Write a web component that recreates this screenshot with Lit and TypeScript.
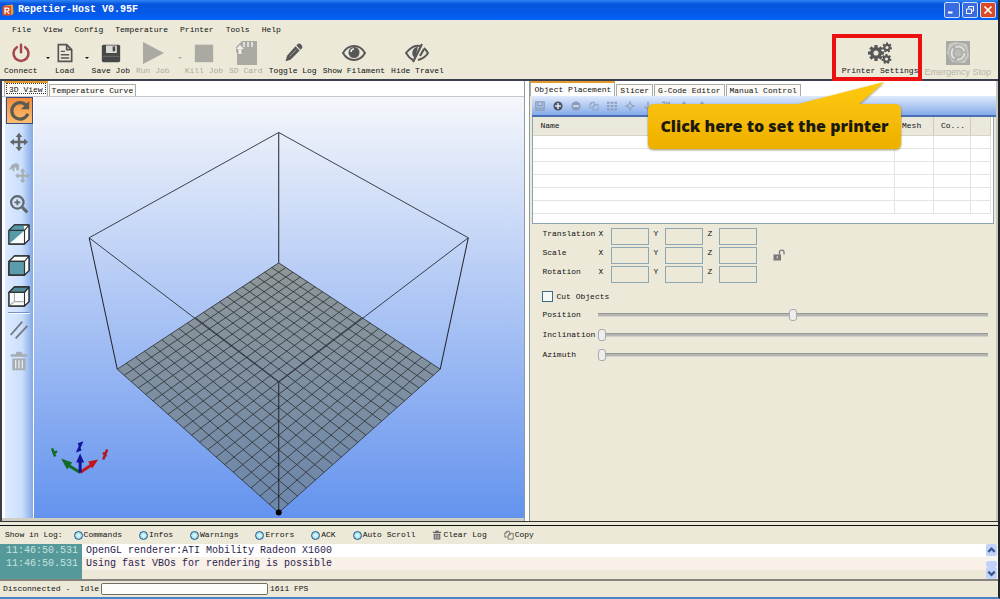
import { LitElement, html, svg, css, nothing } from "lit";
import { customElement } from "lit/decorators.js";
import { classMap } from "lit/directives/class-map.js";

type Pt = [number, number];

const gear = (cx: number, cy: number, r: number, teeth: number) => {
  const items = [];
  for (let i = 0; i < teeth; i++) {
    items.push(svg`<rect x=${cx - r * 0.2} y=${cy - r} width=${r * 0.4} height=${r * 0.5}
      transform="rotate(${(i * 360) / teeth} ${cx} ${cy})"/>`);
  }
  return svg`${items}<circle cx=${cx} cy=${cy} r=${r * 0.53} fill="none" stroke="currentColor" stroke-width=${r * 0.42}/>`;
};

const cube = (part: "diag" | "front" | "top") => svg`
  <g stroke="#333" stroke-width="1.2" stroke-linejoin="round">
    <path fill="#f8fbfb" d="M1 7 7 1H23V17L18 22H1Z"/>
    ${part === "diag" ? svg`<path fill="#549aa8" stroke="none" d="M1 7 7 1H17L18 7 2 21Z"/>` : nothing}
    ${part === "front" ? svg`<path fill="#5a9cab" d="M1 7H18V22H1Z"/>` : nothing}
    ${part === "top" ? svg`<path fill="#4f8b97" d="M1 7 7 1H23L18 7Z"/><path fill="none" stroke="#aaa" d="M7 8V17H17M7 17 2 21"/>` : nothing}
    <path fill="none" d="M1 7H18V22H1ZM1 7 7 1H23L18 7M23 1V17L18 22"/>
  </g>`;

const moveArrows = svg`<path d="M12 1 16 6H13.5V10.500H18V8L23 12 18 16V13.500H13.500V18H16L12 23 8 18H10.500V13.500H6V16L1 12 6 8V10.500H10.500V6H8Z"/>`;
const trash = svg`<path d="M9 1H15L16 4H22V7H2V4H8ZM4 9H20V23H4Z"/><path stroke="#eee" stroke-width="1.500" d="M8 11V21M12 11V21M16 11V21"/>`;
const copy = svg`<g fill="none" stroke="currentColor" stroke-width="2"><path d="M2 7 7 3H13V8M2 7V17H9M2 7H7V3M10 12 14 8H22V22H10ZM10 12H15V8"/></g>`;

const icons: Record<string, unknown> = {
  power: svg`<g fill="none" stroke="#a5474c" stroke-width="3" stroke-linecap="round"><path d="M7 5A9 9 0 1 0 17 5"/><path d="M12 2V11"/></g>`,
  page: svg`<path fill="none" stroke="#555" stroke-width="2" d="M4 2H14L20 8V22H4ZM14 2V8H20"/><path stroke="#555" stroke-width="1.700" d="M7 10H12M7 14H17M7 18H17"/>`,
  disk: svg`<rect x="1" y="2" width="22" height="21" rx="2" fill="#484848"/><rect x="6" y="3" width="13" height="9" fill="#dcdcd6"/><rect x="14" y="4" width="3" height="6" fill="#484848"/><path stroke="#777" d="M2 16H22"/>`,
  play: svg`<path d="M2 1 23 12 2 23Z"/>`,
  stop: svg`<rect x="1" y="2" width="22" height="21"/>`,
  sd: svg`<path d="M8 0H23V24H3V12L2 11V6Z"/><path stroke="#ddd" stroke-width="2" d="M10 1V6M14 1V6M18 1V6"/><path fill="#eee" d="M6 4 10 8H7.500V13H4.500V8H2Z"/>`,
  pencil: svg`<path d="M3 22 5 15 15 4 20 9 9 20ZM16 3 18 1Q20 0 22 2 24 4 23 6L21 8Z"/><path stroke="#aaa" d="M8 16 16 8"/>`,
  eye: svg`<path fill="none" stroke="currentColor" stroke-width="2" d="M1 12Q5 5 12 5T23 12Q19 19 12 19T1 12Z"/><circle cx="12" cy="11.500" r="5.500"/><path fill="none" stroke="#eee" stroke-width="1.500" d="M9 11Q9 8 12 8"/>`,
  eyeoff: svg`<path fill="none" stroke="currentColor" stroke-width="2" d="M8 19Q4 17 1 12 8 3 15 5M19 7Q21 9 23 12 20 17 13 19"/><path d="M10 17A6 6 0 0 1 13 6Z"/><path stroke="currentColor" stroke-width="2.200" d="M8 21 17 3M15 15 19 8"/>`,
  gears: svg`${gear(8, 12, 8, 8)}${gear(19, 6.5, 5, 7)}${gear(18.5, 18, 5, 7)}`,
  emergency: svg`<rect width="24" height="24" fill="#a9a9a5"/><path fill="#c9c9c4" d="M3 3 9 1 21 3 23 15 19 22 6 21 1 12Z"/><circle cx="12" cy="12" r="9" fill="#aeaeaa"/><circle cx="12" cy="12" r="6.500" fill="none" stroke="#dededa" stroke-width="2" stroke-dasharray="11 2.600"/><circle cx="12" cy="12" r="3.500" fill="#bdbdb8"/>`,
  rotate: svg`<path fill="none" stroke="#5d5a52" stroke-width="3.600" d="M19 6A9 9 0 1 0 20.500 15"/><path fill="#5d5a52" d="M22 1V10H13Z"/>`,
  move: moveArrows,
  moveobj: svg`<path d="M1 9 4 3 9 1 12 3V9H9V6H7V10H5V7Z"/><g transform="translate(7 6) scale(.75)">${moveArrows}</g>`,
  zoom: svg`<circle cx="10" cy="10" r="7.500" fill="none" stroke="currentColor" stroke-width="2.600"/><path stroke="currentColor" stroke-width="3.600" d="M16 16 22 22"/><path stroke="currentColor" stroke-width="2" d="M6.500 10H13.500M10 6.500V13.500"/>`,
  cubediag: cube("diag"),
  cubefront: cube("front"),
  cubetop: cube("top"),
  lines: svg`<path stroke="#777784" stroke-width="2.200" d="M2 18 16 2M8 22 22 7"/>`,
  trash,
  copy,
  plus: svg`<circle cx="12" cy="12" r="11"/><path stroke="#e6ecf8" stroke-width="3.500" d="M5 12H19M12 5V19"/>`,
  minus: svg`<circle cx="12" cy="12" r="11"/><path stroke="#dce8fb" stroke-width="3.500" d="M5 12H19"/>`,
  grid: svg`<path stroke="currentColor" stroke-width="5" stroke-dasharray="6 3" d="M0 4H24M0 12H24M0 20H24"/>`,
  center: svg`<path fill="none" stroke="currentColor" stroke-width="2.500" d="M12 5 19 12 12 19 5 12ZM12 0V7M12 17V24M0 12H7M17 12H24"/>`,
  down: svg`<path fill="none" stroke="currentColor" stroke-width="3" d="M12 1V21M4 13 12 21 20 13"/>`,
  slope: svg`<path fill="none" stroke="currentColor" stroke-width="3" d="M2 3H9V12M13 3 20 10M20 2V10H12"/>`,
  peak: svg`<path d="M12 0 17 8H7Z"/><path stroke="currentColor" stroke-width="3" d="M12 6V22"/>`,
  unlock: svg`<rect x="1" y="11" width="15" height="12"/><path fill="none" stroke="currentColor" stroke-width="2.500" d="M13 11V6Q13 2 17.500 2 22 2 22 6V11"/><path stroke="#ddd" stroke-width="2" d="M8.500 14V19"/>`,
  logo: svg`<path fill="#e9a13a" d="M5 3 22 1 23 19 18 23Z"/><rect x="1" y="4" width="17" height="19" fill="#d94f28"/><path fill="none" stroke="#fff" stroke-width="2.500" d="M6 20V8H11Q14 8 14 11T11 14H6M10 14 14 20"/>`,
  min: svg`<rect x="4" y="15" width="9" height="4" fill="#fff"/>`,
  restore: svg`<path fill="none" stroke="#fff" stroke-width="2" d="M9 8V5H19V14H16M5 10H15V19H5Z"/>`,
  close: svg`<path stroke="#fff" stroke-width="3.500" d="M5 5 19 19M19 5 5 19"/>`,
  up: svg`<path fill="none" stroke="#3b5a94" stroke-width="5" d="M5 16 12 9 19 16"/>`,
  dn: svg`<path fill="none" stroke="#3b5a94" stroke-width="5" d="M5 9 12 16 19 9"/>`,
};

const icon = (name: string) =>
  html`<svg class="icon" viewBox="0 0 24 24" fill="currentColor" aria-hidden="true">${icons[name]}</svg>`;

// Corners of the print volume after projection, bed first and then the top frame.
const BED: Pt[] = [[278, 262], [439, 368], [278, 511], [117, 368]];
const TOP: Pt[] = [[278, 132], [467, 237], [278, 381], [89, 237]];
const CELLS = 20;

function project(q: Pt[]) {
  const [[x0, y0], [x1, y1], [x2, y2], [x3, y3]] = q;
  const dx1 = x1 - x2, dx2 = x3 - x2, sx = x0 - x1 + x2 - x3;
  const dy1 = y1 - y2, dy2 = y3 - y2, sy = y0 - y1 + y2 - y3;
  const den = dx1 * dy2 - dx2 * dy1;
  const g = (sx * dy2 - dx2 * sy) / den;
  const h = (dx1 * sy - sx * dy1) / den;
  return (u: number, v: number) => {
    const w = g * u + h * v + 1;
    return [
      ((x1 - x0 + g * x1) * u + (x3 - x0 + h * x3) * v + x0) / w,
      ((y1 - y0 + g * y1) * u + (y3 - y0 + h * y3) * v + y0) / w,
    ].map((n) => n.toFixed(1)).join(" ");
  };
}

function gridPath() {
  const p = project(BED);
  let d = "";
  for (let i = 0; i <= CELLS; i++) {
    const t = i / CELLS;
    d += `M${p(t, 0)}L${p(t, 1)}M${p(0, t)}L${p(1, t)}`;
  }
  return d;
}

const poly = (q: Pt[]) => `M${q.map((p) => p.join(" ")).join("L")}Z`;

@customElement("printer-scene")
class PrinterScene extends LitElement {
  static styles = css`
    :host { display: flex; flex: 1; min-width: 0; background: linear-gradient(#f5f7fb, #6493ee); }
    .scene { flex: 1; width: 100%; min-width: 0; }
  `;
  render() {
    return html`<svg class="scene" viewBox="34 97 489 419" role="img" aria-label="Print bed">
      <defs><linearGradient id="bed" x1="0" y1="0" x2="0" y2="1">
        <stop offset="0" stop-color="#8f9797"/><stop offset="1" stop-color="#6c87ac"/>
      </linearGradient></defs>
      <path d=${poly(BED)} fill="url(#bed)"/>
      <path d=${gridPath()} fill="none" stroke="#33383d" stroke-width=".9"/>
      <path d=${poly(TOP)} fill="none" stroke="#2a2d38" stroke-width=".9"/>
      <path d=${BED.map((b, i) => `M${b.join(" ")}L${TOP[i].join(" ")}`).join("")} stroke="#22252c" stroke-width="1"/>
      <circle cx="278" cy="511" r="3"/>
      <g stroke-width="3">
        <path stroke="#126b22" d="M80 471 67 463"/><path fill="#126b22" d="M61 457 72 461 67 468Z"/>
        <path stroke="#c3161c" d="M80 471 92 463"/><path fill="#c3161c" d="M98 458 88 460 92 467Z"/>
        <path stroke="#14149a" d="M80 471V460"/><path fill="#14149a" d="M80 452 84 461H76Z"/>
      </g>
      <path fill="none" stroke="#126b22" stroke-width="2.500" d="M52 447 55 455M57 450 53 452"/>
      <path fill="none" stroke="#14149a" stroke-width="2.500" d="M78 443 81 442 78 449 81 448"/>
      <path fill="none" stroke="#b01a20" stroke-width="2.500" d="M103 451 106 455M107 448 103 458"/>
    </svg>`;
  }
}

@customElement("app-root")
class AppRoot extends LitElement {
  static styles = css`
    :host {
      display: flex; flex-direction: column; min-height: 100vh; box-sizing: border-box;
      border-right: 2px solid #22262c; border-bottom: 2px solid #4c82c4; background: #ece9d8; color: #111;
      font: 8px/12px "Liberation Mono", "DejaVu Sans Mono", monospace;
    }
    * { box-sizing: border-box; }
    button { font: inherit; color: inherit; background: none; border: 0; padding: 0; margin: 0; white-space: nowrap; }
    input { margin: 0; font: inherit; }
    .icon { display: block; width: 24px; height: 24px; flex: none; }

    .title { display: flex; align-items: center; gap: 4px; height: 20px; padding: 0 2px;
      background: linear-gradient(#2f86f5, #0855dd 20%, #0558e6 60%, #0662f8); color: #fff; }
    .title .icon { width: 12px; height: 12px; }
    .title h1 { flex: 1; margin: 0; font-size: 10px; line-height: 20px; }
    .win { display: flex; gap: 2px; }
    .win button { width: 16px; height: 16px; padding: 1px; border: 1px solid #cfdcf7; border-radius: 2px; background: #3a6be0; }
    .win .close { background: #dc4a26; }

    .menu { display: flex; gap: 12px; padding: 4px 12px; }
    .tools { position: relative; display: flex; align-items: flex-start; padding: 1px 7px 0 4px; border-bottom: 2px solid #3b3e4c; }
    .tool { position: relative; display: flex; flex-direction: column; align-items: center; min-width: 20px; margin-right: 6px; color: #575757; }
    .tool span { color: #111; }
    .tool .icon { padding: 2px; }
    .tool.large .icon { padding: 0; }
    .tool.off, .tool.off span { color: #aaa9a2; }
    .drop { width: 9px; height: 24px; padding-top: 12px; display: flex; justify-content: center; align-items: center; }
    .drop::after { content: ""; border: 2px solid transparent; border-top-color: currentColor; }
    .drop.off { color: #aaa9a2; }
    .space { flex: 1; }
    .marked::after { content: ""; position: absolute; inset: -7px -4px -4px -10px; border: 4px solid #ec1010; }
    .tool.stop { margin: 0; }
    .tool.stop span { font: 9px/14px "Liberation Sans", sans-serif; color: #b5b3a8; }
    .callout { position: absolute; z-index: 2; right: 97px; top: 42px; width: 253px; height: 68px; padding-top: 20px;
      display: flex; align-items: center; justify-content: center; white-space: nowrap;
      font: 700 16px/24px "Open Sans", "Noto Sans", sans-serif; color: #1c1a10; }
    .callout svg { position: absolute; inset: 0; width: 100%; height: 100%; overflow: visible; }
    .callout strong { position: relative; }

    .main { flex: 1; display: flex; background: #fff; border-left: 2px solid #3b3e4c; border-bottom: 1px solid #333; }
    .left { flex: 523 1 0; min-width: 0; display: flex; flex-direction: column; border-right: 1px solid #919b9c; }
    .right { flex: 466 1 0; min-width: 0; display: flex; flex-direction: column; margin-left: 4px; border-left: 1px solid #919b9c; border-right: 2px solid #c9c7ba; background: #ece9d8; }
    .tabs { display: flex; align-items: flex-end; height: 15px; background: #fff; gap: 1px; padding-left: 2px; flex: none; }
    .right .tabs { padding-left: 0; }
    .tab { height: 12px; line-height: 11px; padding: 0 2px; background: #fbfaf6; border: 1px solid #a9aca8; border-bottom: 0; }
    .right .tab { padding: 0 3px; }
    .tab.on { height: 15px; line-height: 13px; border-top: 2px solid #e59a2c; background: #fdfdfb; }
    .left .tab.on { outline: 1px dotted #333; outline-offset: -3px; padding: 0 4px; }
    .view { flex: 1; display: flex; border-top: 1px solid #c2c6c8; border-bottom: 3px solid #cfcfc4; }
    .side { display: flex; flex-direction: column; align-items: center; width: 28px; margin-left: 3px; margin-right: 1px; gap: 4px;
      background: linear-gradient(90deg, #dcebff, #cbe0fd 60%, #84a9e4); color: #62676c; }
    .side button { width: 27px; height: 27px; padding: 2px; display: grid; place-items: center; }
    .side button.on { background: linear-gradient(#f08d3b, #fdbe72); border: 1px solid #3a4a80; }
    .side .icon { width: 22px; height: 22px; }
    .side .small .icon { width: 20px; height: 20px; }
    .side .off { color: #a6adb5; }
    .side hr { width: 22px; margin: -2px 0; border: 0; border-top: 1px solid #6f95cf; border-bottom: 1px solid #fff; }

    .objbar { display: flex; gap: 8px; align-items: center; height: 21px; padding: 0 3px; margin-left: 2px; flex: none;
      background: linear-gradient(#dfeafc, #86abea); border-bottom: 2px solid #4a6fb5; color: #8d9cb6; }
    .objbar .icon { width: 10px; height: 10px; }
    .objbar .strong { color: #4c5362; }
    .grid { margin: 0 2px; border: 1px solid #8ba3b3; border-top: 0; background: #fff; padding-bottom: 9px; }
    table { width: calc(100% - 2px); border-collapse: collapse; table-layout: fixed; }
    th { height: 18px; padding: 0 7px; text-align: left; font-weight: 400; background: #ebe9dc; border-right: 1px solid #cfccbc; border-bottom: 1px solid #d8d5c5; overflow: hidden; white-space: nowrap; }
    td { height: 13px; padding: 0; border-right: 1px solid #e4e4e0; border-bottom: 1px solid #e4e4e0; }
    .cm { width: 39px; } .cc { width: 37px; } .ce { width: 20px; }

    .form { display: flex; flex-direction: column; padding: 3px 8px 0 12px; }
    .xform { display: grid; grid-template-columns: 56px 13px 42px 12px 42px 12px 38px 16px 12px; grid-auto-rows: 19px; align-items: center; }
    .xform input { width: 38px; height: 17px; border: 1px solid #8fa7b2; background: #ece9d8; }
    .xform label { align-self: start; padding-top: 1px; }
    .lock { color: #777; }
    .lock .icon { width: 12px; height: 12px; }
    .cut { display: flex; align-items: center; gap: 3px; height: 16px; margin-top: 5px; }
    .cut input { appearance: none; width: 11px; height: 11px; border: 1px solid #3c6a88; background: #f6f8f5; }
    .slide { display: grid; grid-template-columns: 56px 1fr; align-items: center; height: 20px; }
    .slide input { appearance: none; width: 100%; height: 12px; background: none; }
    .slide input::-webkit-slider-runnable-track { height: 4px; background: #b5b5b2; border-top: 1px solid #98989a; border-bottom: 1px solid #d0cfc8; }
    .slide input::-webkit-slider-thumb { appearance: none; width: 8px; height: 12px; margin-top: -5px; border: 1px solid #a9a9ae; border-radius: 3px; background: #efeeee; }

    .logbar { display: flex; align-items: center; gap: 11px; height: 19px; margin-top: 3px; padding-left: 5px; border-top: 1px solid #111; }
    .logbar label, .logbar button { display: flex; align-items: center; gap: 1px; margin-right: 6px; }
    .logbar input { appearance: none; width: 9px; height: 9px; border: 1px solid #245a86; border-radius: 50%; background: radial-gradient(#d8f8fc 20%, #64bfe0); }
    .logbar .icon { width: 10px; height: 10px; color: #666; }
    .log { display: flex; height: 37px; font-size: 10px; line-height: 13px; border-bottom: 2px solid #85837b; color: #2b2450; }
    .log ol { flex: 1; list-style: none; margin: 0; padding: 0; background: linear-gradient(90deg, #55999a 82px, #ece9d8 82px); }
    .log li { display: flex; }
    .log time { width: 82px; padding-left: 6px; flex: none; color: #c5e3de; }
    .log p { margin: 0; padding-left: 4px; flex: 1; background: #fff; }
    .log li:nth-child(2) p { background: #f9f0e8; }
    .scroll { width: 12px; display: flex; flex-direction: column; justify-content: space-between; background: #f5f4ee; }
    .scroll button, .scroll i { display: block; height: 12px; width: 11px; background: #c1d3fb; border-radius: 2px; }
    .scroll i { height: 6px; margin-top: 4px; }
    .scroll .icon { width: 11px; height: 12px; }
    .status { display: flex; align-items: center; gap: 2px; height: 16px; padding-left: 3px; white-space: pre; }
    progress { appearance: none; width: 167px; height: 12px; border: 1px solid #6f6f6a; border-radius: 2px; background: #fdfdf9; }
    progress::-webkit-progress-bar { background: #fdfdf9; border-radius: 2px; }
  `;

  private tool(name: string, label: string, cls: Record<string, boolean> = {}) {
    return html`<button class=${classMap({ tool: true, ...cls })} ?disabled=${!!cls.off}>${icon(name)}<span>${label}</span></button>`;
  }

  private drop(label: string, off = false) {
    return html`<button class=${classMap({ drop: true, off })} aria-label=${label}></button>`;
  }

  render() {
    return html`
      <header class="title">
        ${icon("logo")}<h1>Repetier-Host V0.95F</h1>
        <div class="win">
          <button aria-label="Minimize">${icon("min")}</button>
          <button aria-label="Restore">${icon("restore")}</button>
          <button class="close" aria-label="Close">${icon("close")}</button>
        </div>
      </header>
      <nav class="menu">
        ${["File", "View", "Config", "Temperature", "Printer", "Tools", "Help"].map((m) => html`<button>${m}</button>`)}
      </nav>
      <div class="tools">
        ${this.tool("power", "Connect")}${this.drop("Connect options")}
        ${this.tool("page", "Load")}${this.drop("Load options")}
        ${this.tool("disk", "Save Job")}
        ${this.tool("play", "Run Job", { off: true, large: true })}${this.drop("Run options", true)}
        ${this.tool("stop", "Kill Job", { off: true })}
        ${this.tool("sd", "SD Card", { off: true, large: true })}
        ${this.tool("pencil", "Toggle Log")}
        ${this.tool("eye", "Show Filament", { large: true })}
        ${this.tool("eyeoff", "Hide Travel", { large: true })}
        <div class="space"></div>
        ${this.tool("gears", "Printer Settings", { marked: true, large: true })}
        ${this.tool("emergency", "Emergency Stop", { off: true, stop: true, large: true })}
        <div class="callout">
          <svg viewBox="0 0 253 68" aria-hidden="true">
            <defs>
              <linearGradient id="gold" x1="0" y1="0" x2="0" y2="1"><stop offset="0" stop-color="#ffca12"/><stop offset="1" stop-color="#eeb000"/></linearGradient>
              <filter id="shade" x="-5%" y="-10%" width="110%" height="130%"><feDropShadow dx="0" dy="1" stdDeviation="1.2" flood-color="#554400" flood-opacity=".6"/></filter>
            </defs>
            <path fill="url(#gold)" filter="url(#shade)" d="M6 22H150L236 0 211 22H247Q253 22 253 28V61Q253 67 247 67H6Q0 67 0 61V28Q0 22 6 22Z"/>
          </svg>
          <strong>Click here to set the printer</strong>
        </div>
      </div>
      <main class="main">
        <section class="left">
          <div class="tabs"><button class="tab on">3D View</button><button class="tab">Temperature Curve</button></div>
          <div class="view">
            <div class="side">
              <button class="on" aria-label="Rotate">${icon("rotate")}</button>
              <button class="small" aria-label="Move">${icon("move")}</button>
              <button class="off" aria-label="Move object">${icon("moveobj")}</button>
              <button class="small" aria-label="Zoom">${icon("zoom")}</button>
              <button aria-label="Isometric view">${icon("cubediag")}</button>
              <button aria-label="Front view">${icon("cubefront")}</button>
              <button aria-label="Top view">${icon("cubetop")}</button>
              <hr />
              <button class="small" aria-label="Parallel projection">${icon("lines")}</button>
              <button class="off small" aria-label="Delete">${icon("trash")}</button>
            </div>
            <printer-scene></printer-scene>
          </div>
        </section>
        <section class="right">
          <div class="tabs">
            <button class="tab on">Object Placement</button><button class="tab">Slicer</button>
            <button class="tab">G-Code Editor</button><button class="tab">Manual Control</button>
          </div>
          <div class="objbar">
            ${["disk", "plus", "minus", "copy", "grid", "center", "down", "slope", "peak", "peak"].map((n) =>
              html`<button class=${n === "plus" ? "strong" : ""} aria-label=${n}>${n === "disk"
                ? html`<svg class="icon" viewBox="0 0 24 24" fill="none" stroke="#8d9cb6" stroke-width="3"><path d="M2 2H22V22H2ZM7 2V11H17V2M3 17H21"/></svg>`
                : icon(n)}</button>`)}
          </div>
          <div class="grid">
            <table>
              <thead><tr><th>Name</th><th class="cm">Mesh</th><th class="cc">Co...</th><th class="ce"></th></tr></thead>
              <tbody>${[0, 1, 2, 3, 4, 5].map(() => html`<tr><td></td><td></td><td></td><td></td></tr>`)}</tbody>
            </table>
          </div>
          <div class="form">
            <div class="xform">
              ${["Translation", "Scale", "Rotation"].map((n) => html`
                <label for=${n + "X"}>${n}</label>
                ${["X", "Y", "Z"].map((a) => html`<label for=${n + a}>${a}</label><input id=${n + a} disabled />`)}
                <span></span>
                ${n === "Scale" ? html`<button class="lock" aria-label="Lock proportions">${icon("unlock")}</button>` : html`<span></span>`}`)}
            </div>
            <label class="cut"><input type="checkbox" />Cut Objects</label>
            ${([["Position", 50], ["Inclination", 0], ["Azimuth", 0]] as [string, number][]).map(([n, v]) => html`
              <div class="slide"><label for=${n}>${n}</label><input id=${n} type="range" min="0" max="100" .value=${String(v)} /></div>`)}
          </div>
        </section>
      </main>
      <div class="logbar">
        <span>Show in Log:</span>
        ${["Commands", "Infos", "Warnings", "Errors", "ACK", "Auto Scroll"].map((n) => html`<label><input type="checkbox" checked />${n}</label>`)}
        <button>${icon("trash")}Clear Log</button>
        <button>${icon("copy")}Copy</button>
      </div>
      <div class="log">
        <ol>
          <li><time>11:46:50.531</time><p>OpenGL renderer:ATI Mobility Radeon X1600</p></li>
          <li><time>11:46:50.531</time><p>Using fast VBOs for rendering is possible</p></li>
        </ol>
        <div class="scroll"><button aria-label="Scroll up">${icon("up")}</button><i></i><button aria-label="Scroll down">${icon("dn")}</button></div>
      </div>
      <footer class="status"><span>Disconnected -  Idle</span><progress value="0" max="1" aria-label="Job progress"></progress><span>1611 FPS</span></footer>
    `;
  }
}
